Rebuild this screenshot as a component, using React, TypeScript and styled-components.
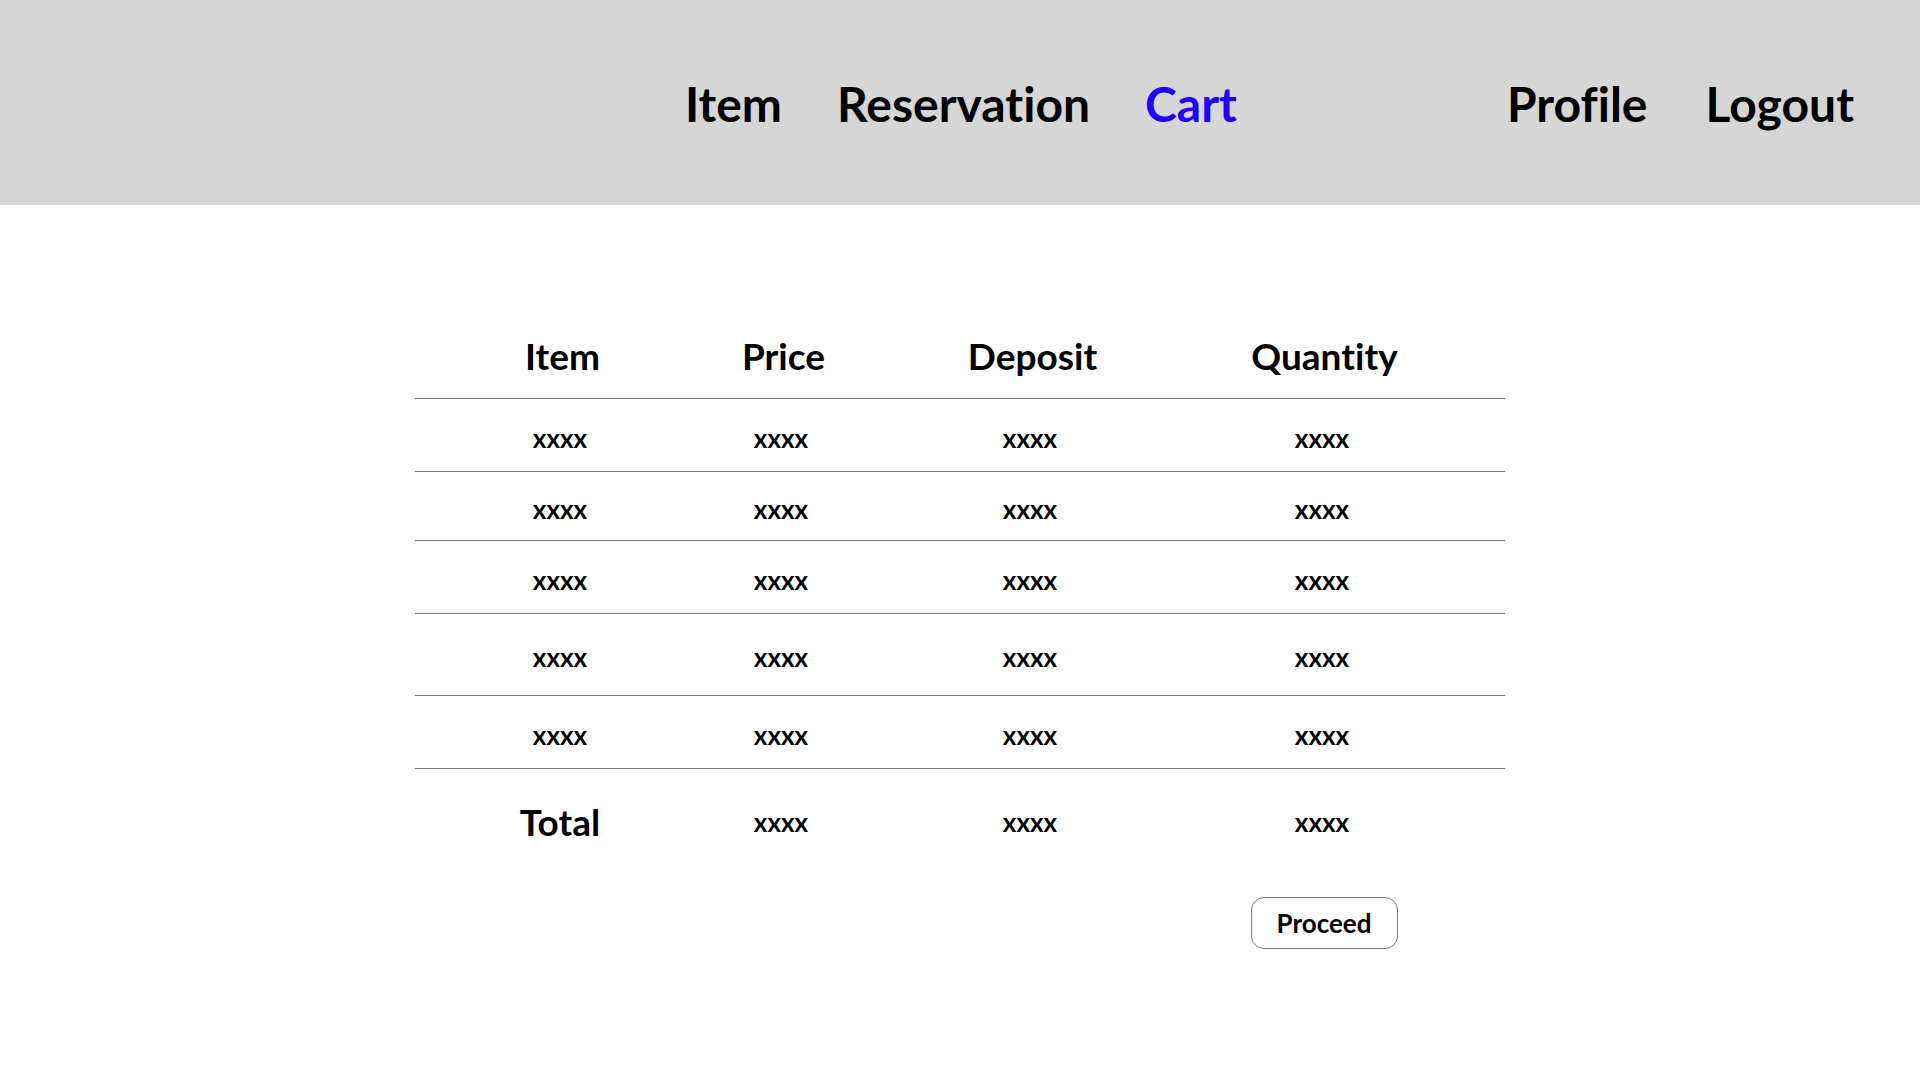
import React from "react";
import styled, { createGlobalStyle } from "styled-components";

const GlobalStyle = createGlobalStyle`
  html, body {
    margin: 0;
    padding: 0;
    background: #ffffff;
    font-family: Lato, "Noto Sans", sans-serif;
    font-variant-ligatures: none;
    color: #000000;
  }
`;

const Header = styled.header`
  height: 205px;
  background: #d6d6d6;
  display: flex;
  align-items: center;
  padding: 2px 66px 0 685px;
  box-sizing: border-box;
`;

const NavGroup = styled.nav<{ $right?: boolean }>`
  display: flex;
  align-items: center;
  gap: ${(p) => (p.$right ? "58px" : "55px")};
  margin-left: ${(p) => (p.$right ? "auto" : "0")};
`;

const NavLink = styled.a<{ $active?: boolean }>`
  font-size: 48px;
  font-weight: 700;
  text-decoration: none;
  font-variant-ligatures: none;
  color: ${(p) => (p.$active ? "#2000ff" : "#000000")};
  cursor: pointer;
`;

const Main = styled.main`
  padding: 107px 0 0 415px;
`;

const Table = styled.div`
  width: 1090px;
  display: flex;
  flex-direction: column;
`;

const Row = styled.div<{ $h: number; $line?: boolean }>`
  display: grid;
  grid-template-columns: 290px 152px 346px 238px;
  align-items: center;
  justify-items: center;
  height: ${(p) => p.$h}px;
  box-sizing: border-box;
  border-bottom: ${(p) => (p.$line ? "1px solid #7a7a7a" : "none")};
`;

const HeadCell = styled.div`
  font-size: 37px;
  font-weight: 700;
  white-space: nowrap;
  font-variant-ligatures: none;
  padding-left: 5px;
`;

const Cell = styled.div<{ $total?: boolean }>`
  font-size: 26px;
  font-weight: 700;
  padding-top: ${(p) => (p.$total ? "2px" : "5px")};
`;

const TotalLabel = styled.div`
  font-size: 37px;
  font-weight: 700;
`;

const ButtonRow = styled.div`
  display: grid;
  grid-template-columns: 290px 152px 346px 242px;
  justify-items: center;
  padding-top: 24px;
`;

const ProceedButton = styled.button`
  grid-column: 4;
  width: 147px;
  height: 52px;
  border: 1px solid #7a7a7a;
  border-radius: 13px;
  background: #ffffff;
  font-family: Lato, "Noto Sans", sans-serif;
  font-size: 26px;
  font-weight: 700;
  color: #000000;
  cursor: pointer;
  white-space: nowrap;
`;

const rows = [73, 69, 73, 82, 73];

export default function App() {
  return (
    <>
      <GlobalStyle />
      <Header>
        <NavGroup>
          <NavLink>Item</NavLink>
          <NavLink>Reservation</NavLink>
          <NavLink $active>Cart</NavLink>
        </NavGroup>
        <NavGroup $right>
          <NavLink>Profile</NavLink>
          <NavLink>Logout</NavLink>
        </NavGroup>
      </Header>
      <Main>
        <Table>
          <Row $h={87} $line>
            <HeadCell>Item</HeadCell>
            <HeadCell>Price</HeadCell>
            <HeadCell>Deposit</HeadCell>
            <HeadCell>Quantity</HeadCell>
          </Row>
          {rows.map((h, i) => (
            <Row key={i} $h={h} $line>
              <Cell>xxxx</Cell>
              <Cell>xxxx</Cell>
              <Cell>xxxx</Cell>
              <Cell>xxxx</Cell>
            </Row>
          ))}
          <Row $h={104}>
            <TotalLabel>Total</TotalLabel>
            <Cell $total>xxxx</Cell>
            <Cell $total>xxxx</Cell>
            <Cell $total>xxxx</Cell>
          </Row>
          <ButtonRow>
            <ProceedButton>Proceed</ProceedButton>
          </ButtonRow>
        </Table>
      </Main>
    </>
  );
}
